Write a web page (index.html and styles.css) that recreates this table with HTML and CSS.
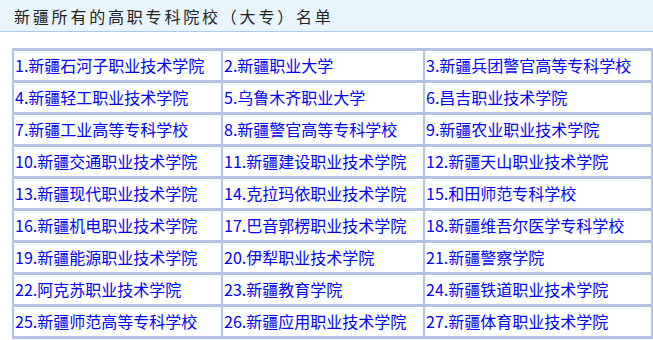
FILE: index.html
```html
<!DOCTYPE html>
<html lang="zh">
<head>
<meta charset="utf-8">
<link rel="stylesheet" href="styles.css">
</head>
<body>
<div class="title-bar"><h2 class="title">新疆所有的高职专科院校（大专）名单</h2></div>
<table class="list">
<colgroup><col class="c1"><col class="c2"><col class="c3"></colgroup>
<tr><td>1.新疆石河子职业技术学院</td><td>2.新疆职业大学</td><td>3.新疆兵团警官高等专科学校</td></tr>
<tr><td>4.新疆轻工职业技术学院</td><td>5.乌鲁木齐职业大学</td><td>6.昌吉职业技术学院</td></tr>
<tr><td>7.新疆工业高等专科学校</td><td>8.新疆警官高等专科学校</td><td>9.新疆农业职业技术学院</td></tr>
<tr><td>10.新疆交通职业技术学院</td><td>11.新疆建设职业技术学院</td><td>12.新疆天山职业技术学院</td></tr>
<tr><td>13.新疆现代职业技术学院</td><td>14.克拉玛依职业技术学院</td><td>15.和田师范专科学校</td></tr>
<tr><td>16.新疆机电职业技术学院</td><td>17.巴音郭楞职业技术学院</td><td>18.新疆维吾尔医学专科学校</td></tr>
<tr><td>19.新疆能源职业技术学院</td><td>20.伊犁职业技术学院</td><td>21.新疆警察学院</td></tr>
<tr><td>22.阿克苏职业技术学院</td><td>23.新疆教育学院</td><td>24.新疆铁道职业技术学院</td></tr>
<tr><td>25.新疆师范高等专科学校</td><td>26.新疆应用职业技术学院</td><td>27.新疆体育职业技术学院</td></tr>
</table>
</body>
</html>
```
FILE: styles.css
```css
html, body {
  margin: 0;
  padding: 0;
  background: #ffffff;
}
body {
  font-family: "Noto Sans CJK SC", sans-serif;
}
.title-bar {
  height: 31px;
  background: #e8f5fc;
  border-bottom: 1px solid #a9c9e8;
  display: flex;
  align-items: center;
  padding-left: 14px;
}
.title {
  margin: 0;
  font-size: 16px;
  font-weight: normal;
  letter-spacing: 2.8px;
  color: #222222;
  line-height: 1;
}
.list {
  margin: 16px 0 0 12px;
  border-collapse: collapse;
  table-layout: fixed;
  width: 639px;
}
.c1 { width: 209px; }
.c2 { width: 202px; }
.c3 { width: 228px; }
.list td {
  border-top: 3px solid #b3c3e6;
  border-bottom: 3px solid #b3c3e6;
  border-left: 2px solid #b3c3e6;
  border-right: 2px solid #b3c3e6;
  height: 29px;
  padding: 0 0 0 1px;
  font-size: 16px;
  line-height: 29px;
  color: #0000ff;
  white-space: nowrap;
  overflow: hidden;
}
```
